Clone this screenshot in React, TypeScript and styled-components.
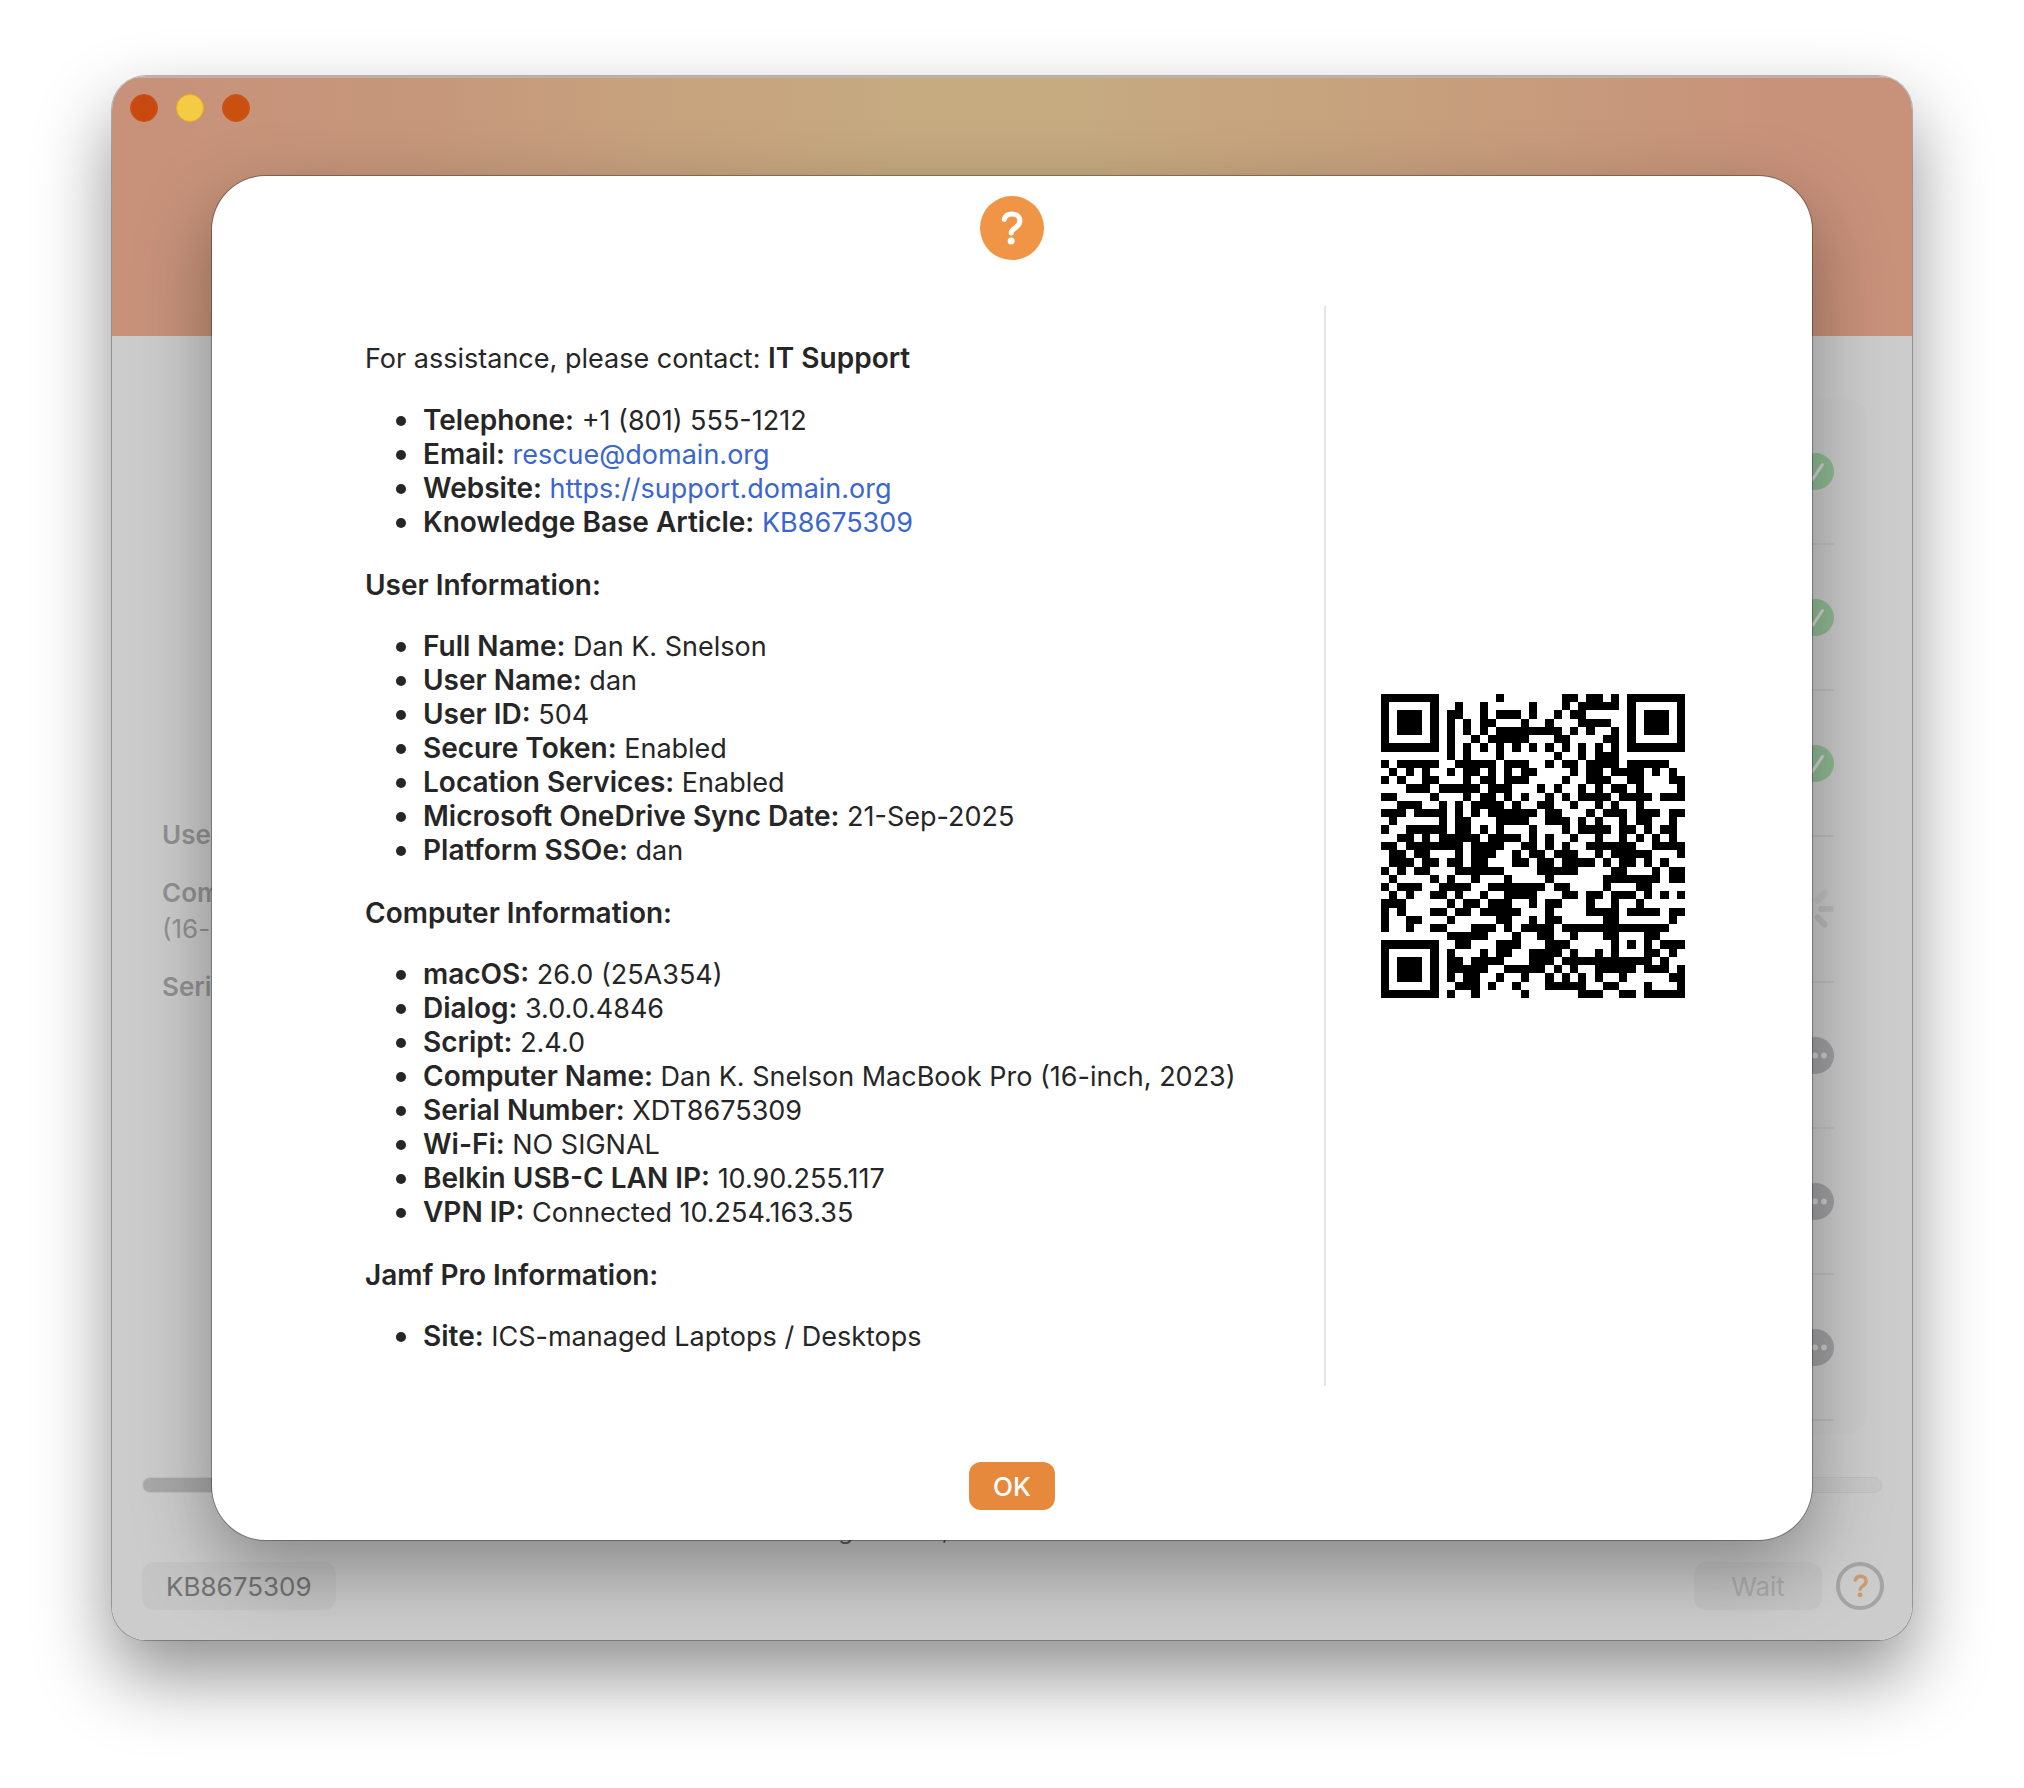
import React from "react";
import styled, { createGlobalStyle } from "styled-components";

/* ---------- QR code (version 5, level M, mask 2) ---------- */

const QR_SIZE = 37;
const QR_BLOCK_DATA = 43;
const QR_BLOCK_ECC = 24;
const QR_FORMAT = 0b101111001111100;

function gfMultiply(a: number, b: number): number {
  let z = 0;
  for (let i = 7; i >= 0; i--) {
    z = (z << 1) ^ ((z >>> 7) * 0x11d);
    z ^= ((b >>> i) & 1) * a;
  }
  return z;
}

function eccFor(data: number[]): number[] {
  const divisor: number[] = new Array(QR_BLOCK_ECC).fill(0);
  divisor[QR_BLOCK_ECC - 1] = 1;
  let root = 1;
  for (let i = 0; i < QR_BLOCK_ECC; i++) {
    for (let j = 0; j < QR_BLOCK_ECC; j++) {
      divisor[j] = gfMultiply(divisor[j], root);
      if (j + 1 < QR_BLOCK_ECC) divisor[j] ^= divisor[j + 1];
    }
    root = gfMultiply(root, 2);
  }
  const rest: number[] = new Array(QR_BLOCK_ECC).fill(0);
  data.forEach((byte) => {
    const factor = byte ^ (rest.shift() as number);
    rest.push(0);
    divisor.forEach((d, i) => {
      rest[i] ^= gfMultiply(d, factor);
    });
  });
  return rest;
}

/* The text goes in as bytes; its trailing digits follow as a numeric segment. */
function encodeQr(text: string, digits: string): boolean[][] {
  const bits: number[] = [];
  const push = (value: number, length: number) => {
    for (let i = length - 1; i >= 0; i--) bits.push((value >>> i) & 1);
  };
  push(4, 4);
  push(text.length, 8);
  for (const ch of text) push(ch.charCodeAt(0), 8);
  push(1, 4);
  push(digits.length, 10);
  for (let i = 0; i < digits.length; i += 3) {
    const group = digits.slice(i, i + 3);
    push(Number(group), group.length * 3 + 1);
  }
  push(0, 4);
  while (bits.length % 8 !== 0) bits.push(0);
  for (let pad = 0xec; bits.length < QR_BLOCK_DATA * 16; pad ^= 0xfd) push(pad, 8);

  const bytes: number[] = [];
  for (let i = 0; i < bits.length; i += 8) bytes.push(parseInt(bits.slice(i, i + 8).join(""), 2));
  const blocks = [bytes.slice(0, QR_BLOCK_DATA), bytes.slice(QR_BLOCK_DATA)].map((b) => [...b, ...eccFor(b)]);
  const stream: number[] = [];
  for (let i = 0; i < QR_BLOCK_DATA + QR_BLOCK_ECC; i++) blocks.forEach((b) => stream.push(b[i]));

  const dark: boolean[][] = Array.from({ length: QR_SIZE }, () => new Array(QR_SIZE).fill(false));
  const fixed: boolean[][] = Array.from({ length: QR_SIZE }, () => new Array(QR_SIZE).fill(false));
  const set = (x: number, y: number, on: boolean) => {
    if (x < 0 || y < 0 || x >= QR_SIZE || y >= QR_SIZE) return;
    dark[y][x] = on;
    fixed[y][x] = true;
  };
  for (let i = 0; i < QR_SIZE; i++) {
    set(6, i, i % 2 === 0);
    set(i, 6, i % 2 === 0);
  }
  const corners = [[3, 3], [QR_SIZE - 4, 3], [3, QR_SIZE - 4]];
  corners.forEach(([cx, cy]) => {
    for (let dy = -4; dy <= 4; dy++)
      for (let dx = -4; dx <= 4; dx++) {
        const d = Math.max(Math.abs(dx), Math.abs(dy));
        set(cx + dx, cy + dy, d !== 2 && d !== 4);
      }
  });
  for (let dy = -2; dy <= 2; dy++)
    for (let dx = -2; dx <= 2; dx++) set(30 + dx, 30 + dy, Math.max(Math.abs(dx), Math.abs(dy)) !== 1);

  const format = (i: number) => ((QR_FORMAT >>> i) & 1) === 1;
  for (let i = 0; i <= 5; i++) set(8, i, format(i));
  set(8, 7, format(6));
  set(8, 8, format(7));
  set(7, 8, format(8));
  for (let i = 9; i < 15; i++) set(14 - i, 8, format(i));
  for (let i = 0; i < 8; i++) set(QR_SIZE - 1 - i, 8, format(i));
  for (let i = 8; i < 15; i++) set(8, QR_SIZE - 15 + i, format(i));
  set(8, QR_SIZE - 8, true);

  let k = 0;
  for (let right = QR_SIZE - 1; right >= 1; right -= 2) {
    if (right === 6) right = 5;
    for (let v = 0; v < QR_SIZE; v++)
      for (let j = 0; j < 2; j++) {
        const x = right - j;
        const y = ((right + 1) & 2) === 0 ? QR_SIZE - 1 - v : v;
        if (fixed[y][x]) continue;
        const bit = k < stream.length * 8 && ((stream[k >>> 3] >>> (7 - (k & 7))) & 1) === 1;
        dark[y][x] = bit !== (x % 3 === 0);
        k++;
      }
  }
  return dark;
}

/* ---------- Styles ---------- */

const GlobalStyle = createGlobalStyle`
  * { box-sizing: border-box; }
  body {
    margin: 0;
    background: #fff;
    color: #262626;
    font-family: Inter, "Liberation Sans", sans-serif;
  }
  button { font-family: inherit; border: 0; padding: 0; margin: 0; }
  p, ul, h2 { margin: 0; padding: 0; }
`;

const Desktop = styled.div`
  padding: 76px 112px 148px;
`;

const Window = styled.div`
  display: grid;
  grid-template-columns: minmax(0, 1fr);
  border-radius: 34px;
  overflow: clip;
  background: #cccccc;
`;

const WindowFrame = styled.div`
  border-radius: 34px;
  box-shadow: 0 0 0 1px rgba(0, 0, 0, 0.26), 0 36px 76px rgba(0, 0, 0, 0.44);
`;

const Backdrop = styled.div`
  grid-area: 1 / 1;
  display: flex;
  flex-direction: column;
`;

const Banner = styled.header`
  height: 260px;
  padding: 16px 18px;
  display: flex;
  gap: 18px;
  border-top: 2px solid #c3b0a2;
  background: linear-gradient(90deg, #c8917a 0%, #c6977b 17%, #c7a27e 30%, #c6aa80 44%, #c6aa80 54%, #c7a07d 72%, #c8917a 94%, #c8917a 100%);
`;

const TrafficLight = styled.button<{ $color: string; $edge: string }>`
  width: 28px;
  height: 28px;
  border-radius: 50%;
  background: ${(p) => p.$color};
  border: 1px solid ${(p) => p.$edge};
`;

const Body = styled.main`
  flex: 1;
  display: flex;
  justify-content: space-between;
  padding: 63px 46px 43px 50px;
`;

const Info = styled.section`
  align-self: center;
  display: flex;
  flex-direction: column;
  gap: 22px;
  padding-bottom: 12px;
  color: #929292;
  font-size: 26px;
  line-height: 36px;
  b { font-weight: 600; }
`;

const Checks = styled.ul`
  width: 1100px;
  list-style: none;
  padding: 0 32px 13px;
  border-radius: 20px;
  background: #cacaca;
`;

const Check = styled.li`
  height: 146px;
  display: flex;
  align-items: center;
  justify-content: flex-end;
  border-bottom: 2px solid #bfbfbf;
`;

const Progress = styled.div`
  height: 16px;
  margin: 0 30px;
  border-radius: 8px;
  border: 1px solid #bfbfbf;
  background: #c7c7c7;
`;

const ProgressFill = styled.div`
  width: 40%;
  height: 100%;
  border-radius: 8px;
  background: #a8a8a8;
`;

const Status = styled.p`
  margin-top: 22px;
  text-align: center;
  font-size: 24px;
  line-height: 32px;
  color: #5c5c5c;
`;

const Footer = styled.footer`
  display: flex;
  align-items: center;
  gap: 14px;
  padding: 15px 28px 30px 30px;
`;

const PushButton = styled.button<{ $tone?: "primary" | "dim" }>`
  height: 48px;
  padding: 2px 24px 0;
  border-radius: 12px;
  font-size: 26px;
  line-height: 32px;
  font-weight: ${(p) => (p.$tone === "primary" ? 500 : 400)};
  background: ${(p) => (p.$tone === "primary" ? "#e7893c" : "rgba(0, 0, 0, 0.03)")};
  color: ${(p) => (p.$tone === "primary" ? "#fff" : p.$tone === "dim" ? "#acacac" : "#737373")};
`;

const WaitButton = styled(PushButton)`
  width: 128px;
  margin-left: auto;
`;

const RoundHelp = styled.button`
  width: 48px;
  height: 48px;
  display: grid;
  place-items: center;
  border-radius: 50%;
  border: 4px solid #a5a5a5;
  background: transparent;
  color: #cc9b70;
`;

const Sheet = styled.section`
  grid-area: 1 / 1;
  position: relative;
  margin: 100px;
  padding: 20px 0 30px;
  display: flex;
  flex-direction: column;
  align-items: center;
  border-radius: 54px;
  background: #fff;
  box-shadow: 0 0 0 1px rgba(0, 0, 0, 0.3), 0 28px 76px rgba(0, 0, 0, 0.34);
`;

const Columns = styled.div`
  align-self: stretch;
  flex: 1;
  display: grid;
  grid-template-columns: minmax(0, 1fr) 416px;
  margin: 46px 72px 76px 153px;
`;

const HelpText = styled.div`
  display: flex;
  flex-direction: column;
  gap: 28px;
  padding: 36px 24px 32px 0;
  font-size: 27px;
  line-height: 34px;
`;

const Label = styled.b`
  font-size: 28px;
  line-height: 32px;
  font-weight: 600;
`;

const SectionTitle = styled.h2`
  font-size: 28px;
  line-height: 34px;
  font-weight: 600;
`;

const Facts = styled.ul`
  list-style: none;
`;

const Fact = styled.li`
  display: flex;
  align-items: center;
  height: 34px;
  padding-left: 31px;
  &::before {
    content: "";
    width: 10px;
    height: 10px;
    margin-right: 17px;
    border-radius: 50%;
    background: #262626;
    flex: none;
  }
`;

const Link = styled.a`
  color: #3b66cf;
  text-decoration: none;
`;

const QrPane = styled.div`
  display: grid;
  place-items: center;
  border-left: 2px solid #e4e4e4;
`;

/* ---------- Drawings ---------- */

const QuestionMark = ({ color }: { color: string }) => (
  <>
    <path
      d="M24.2 23.4C25.1 20 28 17.9 31.8 17.9C36.5 17.9 39.9 20.7 39.9 24.8C39.9 28 38.2 29.9 35.3 31.8C32.3 33.8 31.2 34.8 31.2 36.9"
      fill="none"
      stroke={color}
      strokeWidth="5"
      strokeLinecap="round"
      strokeLinejoin="round"
    />
    <circle cx="31.1" cy="44.9" r="3.5" fill={color} />
  </>
);

const HelpBadge = () => (
  <svg width="64" height="64" viewBox="0 0 64 64" role="img" aria-label="Help">
    <circle cx="32" cy="32" r="32" fill="#f09445" />
    <QuestionMark color="#fff" />
  </svg>
);

const DoneIcon = () => (
  <svg width="37" height="37" viewBox="0 0 37 37" aria-hidden="true">
    <circle cx="18.5" cy="18.5" r="18.5" fill="#8fba93" />
    <path d="M11 20l4.6 6.4L25.4 11.6" fill="none" stroke="#d2d2d2" strokeWidth="3" strokeLinecap="round" strokeLinejoin="round" />
  </svg>
);

const WaitingIcon = () => (
  <svg width="37" height="37" viewBox="0 0 37 37" aria-hidden="true">
    <circle cx="18.5" cy="18.5" r="18.5" fill="#a0a0a3" />
    {[9, 18, 27].map((x) => (
      <circle key={x} cx={x} cy="18.5" r="2.9" fill="#cacaca" />
    ))}
  </svg>
);

const spinnerPetals = [
  [0, 0.9],
  [45, 1],
  [90, 0.5],
  [135, 0.5],
  [180, 0.5],
  [225, 0.5],
  [270, 0.3],
  [315, 0.45],
];

const Spinner = () => (
  <svg width="50" height="50" viewBox="0 0 50 50" aria-hidden="true">
    {spinnerPetals.map(([angle, opacity]) => (
      <line
        key={angle}
        x1="37"
        x2="47"
        y1="25"
        y2="25"
        transform={`rotate(${angle} 25 25)`}
        stroke="#b9b9b9"
        strokeOpacity={opacity}
        strokeWidth="6"
        strokeLinecap="round"
      />
    ))}
  </svg>
);

const QrCode = ({ text, digits }: { text: string; digits: string }) => {
  const path = encodeQr(text, digits)
    .flatMap((row, y) => row.map((on, x) => (on ? `M${x} ${y}h1v1h-1z` : "")))
    .join("");
  return (
    <svg width="304" height="304" viewBox="0 0 37 37" shapeRendering="crispEdges" role="img" aria-label="QR code">
      <path d={path} fill="#000" />
    </svg>
  );
};

/* ---------- Content ---------- */

type FactItem = { label: string; value: string; href?: string };

const ARTICLE_PREFIX = "https://servicenow.domain.org/support?id=kb_article_view&sysparm_article=KB";
const ARTICLE_NUMBER = "8675309";

const support: FactItem[] = [
  { label: "Telephone:", value: "+1 (801) 555-1212" },
  { label: "Email:", value: "rescue@domain.org", href: "mailto:rescue@domain.org" },
  { label: "Website:", value: "https://support.domain.org", href: "https://support.domain.org" },
  { label: "Knowledge Base Article:", value: "KB8675309", href: ARTICLE_PREFIX + ARTICLE_NUMBER },
];

const sections: { title: string; facts: FactItem[] }[] = [
  {
    title: "User Information:",
    facts: [
      { label: "Full Name:", value: "Dan K. Snelson" },
      { label: "User Name:", value: "dan" },
      { label: "User ID:", value: "504" },
      { label: "Secure Token:", value: "Enabled" },
      { label: "Location Services:", value: "Enabled" },
      { label: "Microsoft OneDrive Sync Date:", value: "21-Sep-2025" },
      { label: "Platform SSOe:", value: "dan" },
    ],
  },
  {
    title: "Computer Information:",
    facts: [
      { label: "macOS:", value: "26.0 (25A354)" },
      { label: "Dialog:", value: "3.0.0.4846" },
      { label: "Script:", value: "2.4.0" },
      { label: "Computer Name:", value: "Dan K. Snelson MacBook Pro (16-inch, 2023)" },
      { label: "Serial Number:", value: "XDT8675309" },
      { label: "Wi-Fi:", value: "NO SIGNAL" },
      { label: "Belkin USB-C LAN IP:", value: "10.90.255.117" },
      { label: "VPN IP:", value: "Connected 10.254.163.35" },
    ],
  },
  {
    title: "Jamf Pro Information:",
    facts: [{ label: "Site:", value: "ICS-managed Laptops / Desktops" }],
  },
];

const FactList = ({ facts }: { facts: FactItem[] }) => (
  <Facts>
    {facts.map((fact) => (
      <Fact key={fact.label}>
        <span>
          <Label>{fact.label}</Label> {fact.href ? <Link href={fact.href}>{fact.value}</Link> : fact.value}
        </span>
      </Fact>
    ))}
  </Facts>
);

const checkIcons = [DoneIcon, DoneIcon, DoneIcon, Spinner, WaitingIcon, WaitingIcon, WaitingIcon];

export default function App() {
  return (
    <Desktop>
      <GlobalStyle />
      <WindowFrame>
        <Window>
          <Backdrop>
            <Banner>
              <TrafficLight aria-label="Close" $color="#c94a10" $edge="#cb5217" />
              <TrafficLight aria-label="Minimize" $color="#f3cb45" $edge="#efae0e" />
              <TrafficLight aria-label="Zoom" $color="#c95010" $edge="#cb5817" />
            </Banner>
            <Body>
              <Info>
                <p><b>User:</b> dan</p>
                <p><b>Computer:</b><br />(16-inch, 2023)</p>
                <p><b>Serial:</b></p>
              </Info>
              <Checks>
                {checkIcons.map((Icon, i) => (
                  <Check key={i}><Icon /></Check>
                ))}
              </Checks>
            </Body>
            <Progress role="progressbar" aria-label="Progress" aria-valuenow={40}><ProgressFill /></Progress>
            <Status>Checking macOS, FileVault and firewall state …</Status>
            <Footer>
              <PushButton>KB8675309</PushButton>
              <WaitButton $tone="dim" disabled>Wait</WaitButton>
              <RoundHelp aria-label="Help">
                <svg width="40" height="40" viewBox="2 3 58 58" aria-hidden="true">
                  <QuestionMark color="currentColor" />
                </svg>
              </RoundHelp>
            </Footer>
          </Backdrop>
          <Sheet role="dialog" aria-label="Help">
            <HelpBadge />
            <Columns>
              <HelpText>
                <p>For assistance, please contact: <Label>IT Support</Label></p>
                <FactList facts={support} />
                {sections.map((section) => (
                  <React.Fragment key={section.title}>
                    <SectionTitle>{section.title}</SectionTitle>
                    <FactList facts={section.facts} />
                  </React.Fragment>
                ))}
              </HelpText>
              <QrPane>
                <QrCode text={ARTICLE_PREFIX} digits={ARTICLE_NUMBER} />
              </QrPane>
            </Columns>
            <PushButton $tone="primary">OK</PushButton>
          </Sheet>
        </Window>
      </WindowFrame>
    </Desktop>
  );
}
